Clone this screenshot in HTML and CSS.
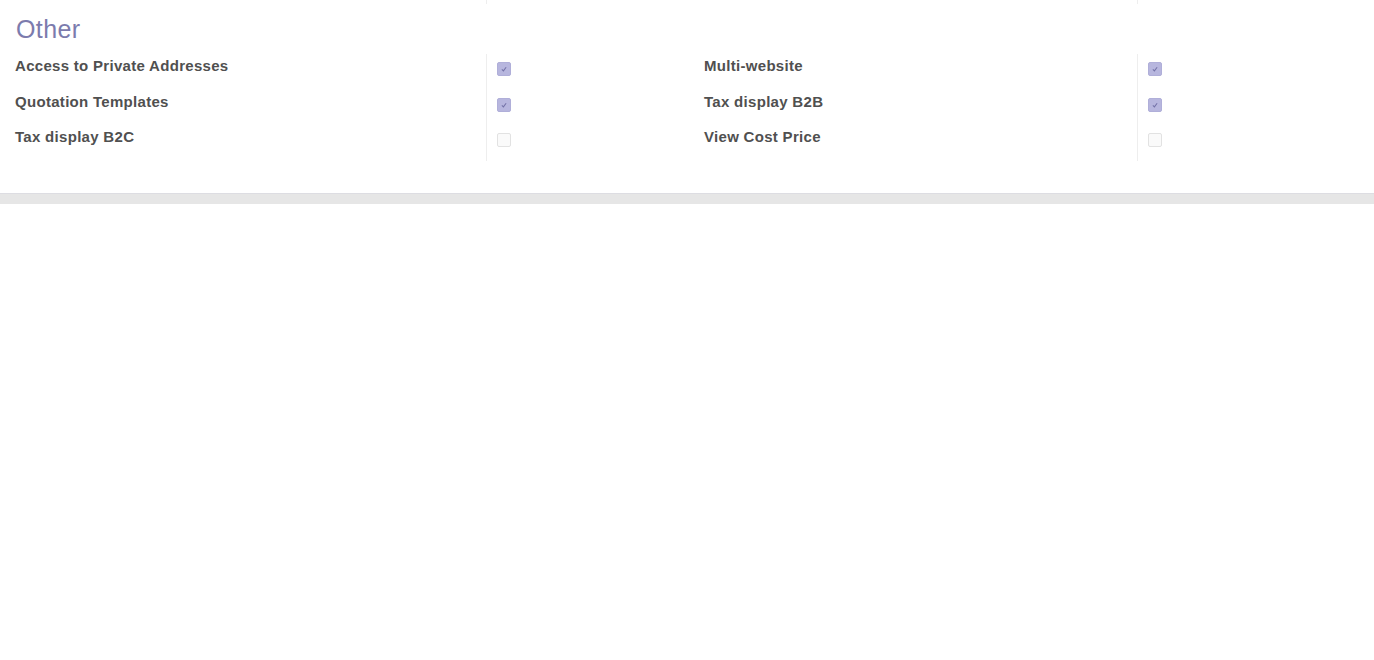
FILE: index.html
```html
<!DOCTYPE html>
<html>
<head>
<meta charset="utf-8">
<link rel="stylesheet" href="styles.css">
</head>
<body>
<div class="sheet">
  <div class="top-lines">
    <div class="tl-label"></div>
    <div class="tl-cell"></div>
    <div class="tl-cell"></div>
  </div>
  <h2 class="title">Other</h2>
  <div class="grid">
    <div class="label">Access to Private Addresses</div>
    <div class="cell"><span class="cb checked"><svg viewBox="0 0 14 14"><path d="M4.5 7.5 L6.3 9.2 L9.5 5" fill="none" stroke="#7473a8" stroke-width="1.2"/></svg></span></div>
    <div class="label right">Multi-website</div>
    <div class="cell"><span class="cb checked"><svg viewBox="0 0 14 14"><path d="M4.5 7.5 L6.3 9.2 L9.5 5" fill="none" stroke="#7473a8" stroke-width="1.2"/></svg></span></div>

    <div class="label">Quotation Templates</div>
    <div class="cell"><span class="cb checked"><svg viewBox="0 0 14 14"><path d="M4.5 7.5 L6.3 9.2 L9.5 5" fill="none" stroke="#7473a8" stroke-width="1.2"/></svg></span></div>
    <div class="label right">Tax display B2B</div>
    <div class="cell"><span class="cb checked"><svg viewBox="0 0 14 14"><path d="M4.5 7.5 L6.3 9.2 L9.5 5" fill="none" stroke="#7473a8" stroke-width="1.2"/></svg></span></div>

    <div class="label">Tax display B2C</div>
    <div class="cell"><span class="cb"></span></div>
    <div class="label right">View Cost Price</div>
    <div class="cell"><span class="cb"></span></div>
  </div>
</div>
<div class="shadow"></div>
</body>
</html>
```

FILE: styles.css
```css
html, body {
  margin: 0;
  padding: 0;
  background: #ffffff;
}
body {
  font-family: "Liberation Sans", Arial, sans-serif;
}
.sheet {
  background: #fff;
  height: 193px;
}
.top-lines {
  display: grid;
  grid-template-columns: 486px 651px 237px;
  height: 4px;
}
.tl-cell {
  border-left: 1px solid #eeeeee;
}
.title {
  margin: 11px 0 0 16px;
  font-size: 25px;
  font-weight: normal;
  letter-spacing: 0.4px;
  color: #7c7bad;
  line-height: 28px;
  height: 28px;
}
.grid {
  margin-top: 11px;
  display: grid;
  grid-template-columns: 486px 218px 433px 237px;
  grid-auto-rows: 35.5px;
}
.label {
  font-size: 15px;
  font-weight: bold;
  letter-spacing: 0.3px;
  color: #505050;
  padding-left: 15px;
  padding-top: 3px;
  box-sizing: border-box;
  white-space: nowrap;
}
.label.right {
  padding-left: 0;
}
.cell {
  border-left: 1px solid #eeeeee;
  padding-left: 10px;
  padding-top: 8px;
  box-sizing: border-box;
}
.cb {
  display: block;
  width: 14px;
  height: 14px;
  box-sizing: border-box;
  border: 1px solid #e2e2e2;
  border-radius: 2px;
  background: #fafafa;
}
.cb.checked {
  background: #b7b6de;
  border-color: #b0afd9;
}
.cb svg {
  display: block;
  width: 12px;
  height: 12px;
}
.shadow {
  height: 11px;
  background: #e6e6e6;
  border-top: 1px solid #dddde2;
  box-sizing: border-box;
}
```
